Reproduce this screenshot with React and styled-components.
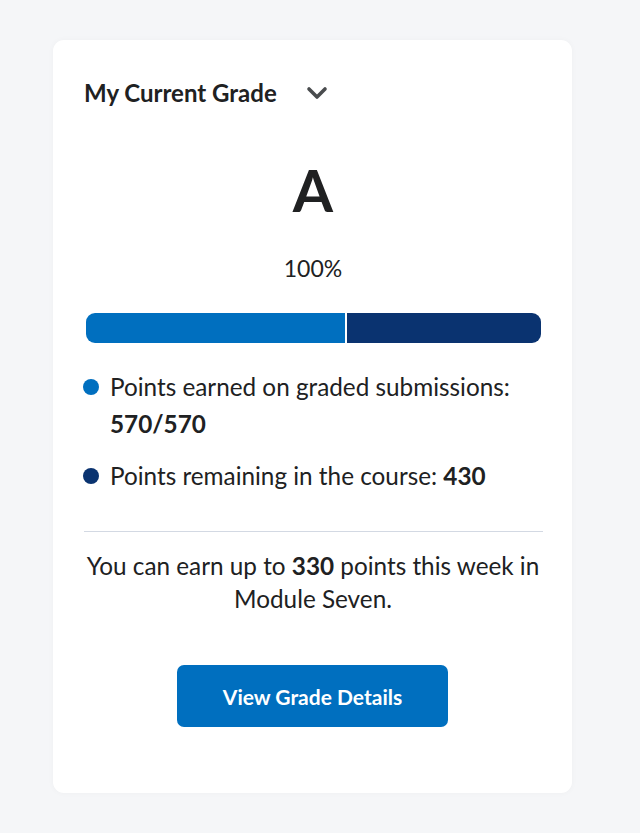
import React from "react";
import styled, { createGlobalStyle } from "styled-components";

const Global = createGlobalStyle`
  html, body { margin: 0; padding: 0; background: #f5f6f8; }
  body { font-family: Lato, "Open Sans", "Liberation Sans", sans-serif; color: #202122; }
`;

const Page = styled.div`
  padding: 40px 68px 40px 53px;
`;

const Card = styled.section`
  width: 519px;
  height: 753px;
  box-sizing: border-box;
  background: #ffffff;
  border-radius: 11px;
  box-shadow: 0 0 6px rgba(0, 0, 0, 0.03);
  padding: 39px 30px 0 31px;
  display: flex;
  flex-direction: column;
`;

const Header = styled.div`
  display: flex;
  align-items: center;
  gap: 29px;
`;

const Title = styled.h2`
  margin: 0;
  font-size: 24px;
  line-height: 28px;
  font-weight: 700;
  color: #202122;
`;

const Toggle = styled.button`
  border: 0;
  background: none;
  padding: 0;
  display: flex;
  align-items: center;
  cursor: pointer;
  color: #494c4e;
`;

const Grade = styled.div`
  margin-top: 54px;
  text-align: center;
  font-size: 58px;
  line-height: 58px;
  font-weight: 700;
`;

const Percent = styled.div`
  margin-top: 37px;
  text-align: center;
  font-size: 23px;
  line-height: 24px;
`;

const Bar = styled.div`
  margin-top: 33px;
  margin-left: 2px;
  width: 455px;
  height: 30px;
  border-radius: 9px;
  overflow: hidden;
  display: flex;
  gap: 2px;
`;

const Segment = styled.div`
  height: 100%;
  background: ${(p) => p.$color};
`;

const Legend = styled.ul`
  list-style: none;
  margin: 25px 0 0;
  padding: 0;
  display: flex;
  flex-direction: column;
  gap: 15px;
`;

const LegendItem = styled.li`
  position: relative;
  padding-left: 26px;
  font-size: 24.3px;
  line-height: 37px;
`;

const Dot = styled.span`
  position: absolute;
  left: -1px;
  top: 11px;
  width: 16px;
  height: 16px;
  border-radius: 50%;
  background: ${(p) => p.$color};
`;

const Divider = styled.hr`
  margin: 37px 0 0;
  width: 459px;
  border: 0;
  border-top: 1.5px solid #d3d9e3;
`;

const Note = styled.p`
  margin: 17px 0 0;
  text-align: center;
  font-size: 24.3px;
  line-height: 33px;
`;

const Action = styled.button`
  align-self: center;
  margin-top: 50px;
  margin-left: -1px;
  width: 271px;
  height: 62px;
  border: 0;
  border-radius: 7px;
  background: #006fbf;
  color: #ffffff;
  font-family: inherit;
  font-size: 21px;
  font-weight: 700;
  cursor: pointer;
`;

export default function App() {
  const earned = 570;
  const remaining = 430;
  const total = earned + remaining;
  return (
    <>
      <Global />
      <Page>
        <Card>
          <Header>
            <Title>My Current Grade</Title>
            <Toggle aria-label="Toggle">
              <svg width="22" height="14" viewBox="0 0 22 14">
                <path d="M3 3 L11 11 L19 3" fill="none" stroke="currentColor" strokeWidth="3.6" strokeLinecap="round" strokeLinejoin="round" />
              </svg>
            </Toggle>
          </Header>
          <Grade>A</Grade>
          <Percent>100%</Percent>
          <Bar>
            <Segment $color="#006fbf" style={{ width: `${(earned / total) * 100}%` }} />
            <Segment $color="#0a3370" style={{ flex: 1 }} />
          </Bar>
          <Legend>
            <LegendItem>
              <Dot $color="#006fbf" />
              Points earned on graded submissions: <b>570/570</b>
            </LegendItem>
            <LegendItem>
              <Dot $color="#0a3370" />
              Points remaining in the course: <b>430</b>
            </LegendItem>
          </Legend>
          <Divider />
          <Note>
            You can earn up to <b>330</b> points this week in Module Seven.
          </Note>
          <Action>View Grade Details</Action>
        </Card>
      </Page>
    </>
  );
}
